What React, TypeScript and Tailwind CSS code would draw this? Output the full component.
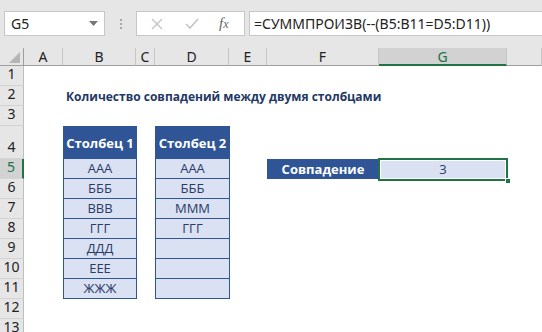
import React from "react";

const font = { fontFamily: '"Open Sans", "Noto Sans", sans-serif' };
const uiFont = { fontFamily: '"Noto Sans", "Open Sans", sans-serif' };

const colB = ["ААА", "БББ", "ВВВ", "ГГГ", "ДДД", "ЕЕЕ", "ЖЖЖ"];
const colD = ["ААА", "БББ", "МММ", "ГГГ", "", "", ""];

function DataTable({ title, rows, col }: { title: string; rows: string[]; col: string }) {
  return (
    <div className={`${col} row-start-5 row-span-8 flex flex-col border border-[#2f5597] -mr-px`}>
      <div className="h-[32px] bg-[#2f5597] text-white font-bold text-[13px] flex items-center justify-center pt-[3px]">
        {title}
      </div>
      {rows.map((r, i) => (
        <div
          key={i}
          className="h-[20px] shrink-0 bg-[#d9e1f2] border-t border-[#2f5597] text-[#2b3a67] text-[13px] flex items-center justify-center"
        >
          {r}
        </div>
      ))}
    </div>
  );
}

export default function App() {
  const letters = ["A", "B", "C", "D", "E", "F", "G", ""];
  const rowNums = [1, 2, 3, 4, 5, 6, 7, 8, 9, 10, 11, 12, 13];

  return (
    <div className="w-[542px] h-[332px] overflow-hidden bg-white" style={font}>
      {/* Formula bar */}
      <div className="h-[48px] bg-[#e6e6e6] flex items-start pt-[11px] pl-[4px] gap-0" style={uiFont}>
        <div className="w-[101px] h-[25px] bg-white border border-[#c6c6c6] flex items-center justify-between pl-[6px] pr-[6px] text-[14px] text-[#222]">
          <span>G5</span>
          <svg width="9" height="5" viewBox="0 0 9 5">
            <polygon points="0,0 9,0 4.5,5" fill="#777" />
          </svg>
        </div>
        <div className="w-[31px] h-[25px] flex flex-col items-center justify-center gap-[2px]">
          <span className="w-[2px] h-[2px] bg-[#a8a8a8]" />
          <span className="w-[2px] h-[2px] bg-[#a8a8a8]" />
          <span className="w-[2px] h-[2px] bg-[#a8a8a8]" />
        </div>
        <div className="w-[109px] h-[25px] bg-white border border-[#c6c6c6] flex items-center">
          <svg width="12" height="12" viewBox="0 0 12 12" className="ml-[14px]">
            <path d="M1 1 L11 11 M11 1 L1 11" stroke="#c4c4c4" strokeWidth="1.4" fill="none" />
          </svg>
          <svg width="14" height="11" viewBox="0 0 14 11" className="ml-[22px]">
            <path d="M1 6 L5 10 L13 1" stroke="#c4c4c4" strokeWidth="1.6" fill="none" />
          </svg>
          <span
            className="ml-[20px] text-[15px] italic text-[#666]"
            style={{ fontFamily: '"Liberation Serif", serif' }}
          >
            f<span className="text-[12px]">x</span>
          </span>
        </div>
        <div className="ml-[4px] flex-1 h-[25px] bg-white border border-[#c6c6c6] border-r-0 flex items-center pl-[4px] text-[14px] text-[#222] whitespace-nowrap">
          =СУММПРОИЗВ(--(B5:B11=D5:D11))
        </div>
      </div>

      {/* Sheet */}
      <div
        className="grid grid-cols-[24px_39px_73px_19px_74px_38px_112px_128px_1fr] grid-rows-[18px_20px_20px_20px_33px_20px_20px_20px_20px_20px_20px_20px_20px_20px]"
      >
        {/* corner */}
        <div className="col-start-1 row-start-1 bg-[#e6e6e6] border-b border-r border-[#9e9e9e] relative">
          <svg width="11" height="11" viewBox="0 0 11 11" className="absolute right-[3px] bottom-[2px]">
            <polygon points="11,0 11,11 0,11" fill="#b5b5b5" />
          </svg>
        </div>
        {letters.map((l, i) =>
          l === "G" ? (
            <div
              key={i}
              className="row-start-1 bg-[#d2d2d2] border-b-2 border-r border-b-[#217346] border-r-[#c6c6c6] flex items-center justify-center text-[14px] text-[#217346]"
              style={{ ...uiFont, gridColumnStart: i + 2 }}
            >
              {l}
            </div>
          ) : (
            <div
              key={i}
              className="row-start-1 bg-[#e6e6e6] border-b border-r border-b-[#9e9e9e] border-r-[#c6c6c6] flex items-center justify-center text-[14px] text-[#222]"
              style={{ ...uiFont, gridColumnStart: i + 2 }}
            >
              {l}
            </div>
          )
        )}

        {/* row headers */}
        {rowNums.map((n) => (
          <div
            key={n}
            className={`col-start-1 border-b border-b-[#d4d4d4] flex items-end justify-center pb-[1px] text-[14px] ${
              n === 5
                ? "bg-[#d2d2d2] border-r-2 border-r-[#217346] text-[#217346]"
                : "bg-[#e6e6e6] border-r border-r-[#bdbdbd] text-[#222]"
            }`}
            style={{ ...uiFont, gridRowStart: n + 1 }}
          >
            {n}
          </div>
        ))}

        {/* title */}
        <div className="col-start-3 col-span-6 row-start-3 flex items-center pl-[3px] pt-[2px] text-[12px] font-bold text-[#1f3864] whitespace-nowrap">
          Количество совпадений между двумя столбцами
        </div>

        <DataTable title="Столбец 1" rows={colB} col="col-start-3" />
        <DataTable title="Столбец 2" rows={colD} col="col-start-5" />

        {/* F5 / G5 */}
        <div className="col-start-7 row-start-6 bg-[#2f5597] text-white font-bold text-[13px] flex items-center justify-center pt-[1px]">
          Совпадение
        </div>
        <div className="col-start-8 row-start-6 bg-[#d9e1f2] relative flex items-center justify-center text-[13px] text-[#2b3a67] pt-[1px]">
          3
          <div className="absolute -left-[1px] -top-[1px] -right-[1px] -bottom-[2px] border-2 border-[#217346]">
            <div className="absolute inset-0 border border-white" />
          </div>
          <div className="absolute -right-[4px] -bottom-[5px] w-[6px] h-[6px] bg-[#217346] border border-white" />
        </div>
      </div>
    </div>
  );
}
